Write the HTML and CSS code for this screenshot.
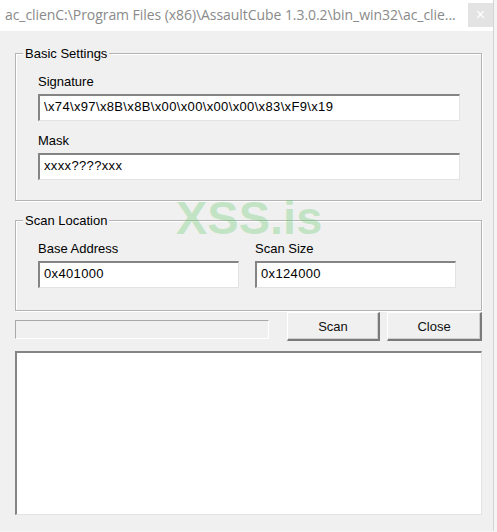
FILE: index.html
```html
<!DOCTYPE html>
<html>
<head>
<meta charset="utf-8">
<link rel="stylesheet" href="styles.css">
</head>
<body>
<div class="window">
  <div class="titlebar">
    <span class="title">ac_clienC:\Program Files (x86)\AssaultCube 1.3.0.2\bin_win32\ac_clie...</span>
    <span class="close-x">×</span>
  </div>
  <div class="client">
    <div class="group group-basic">
      <div class="legend">Basic Settings</div>
      <div class="label">Signature</div>
      <div class="edit">\x74\x97\x8B\x8B\x00\x00\x00\x00\x83\xF9\x19</div>
      <div class="label">Mask</div>
      <div class="edit">xxxx????xxx</div>
    </div>
    <div class="group group-scan">
      <div class="legend">Scan Location</div>
      <div class="cols">
        <div class="col">
          <div class="label">Base Address</div>
          <div class="edit">0x401000</div>
        </div>
        <div class="col">
          <div class="label">Scan Size</div>
          <div class="edit">0x124000</div>
        </div>
      </div>
    </div>
    <div class="actions">
      <div class="progress"></div>
      <div class="btn btn-scan">Scan</div>
      <div class="btn btn-close">Close</div>
    </div>
    <div class="listbox"></div>
  </div>
  <div class="watermark">XSS.is</div>
</div>
</body>
</html>
```
FILE: styles.css
```css
html, body {
  margin: 0;
  padding: 0;
}
body {
  width: 497px;
  height: 532px;
  background: #f4f4f4;
  font-family: "Liberation Sans", Arial, sans-serif;
  font-size: 13px;
  color: #000;
  overflow: hidden;
}
.window {
  position: relative;
  width: 493px;
  height: 531px;
  background: #f0f0f0;
  border-right: 1px solid #d4d4d4;
}
.titlebar {
  height: 31px;
  background: #fff;
  display: flex;
  align-items: flex-start;
}
.title {
  flex: none;
  font-family: "Open Sans", "Noto Sans", sans-serif;
  font-size: 14px;
  letter-spacing: -0.06px;
  line-height: 30px;
  color: #8a8a8a;
  padding-left: 5px;
  white-space: nowrap;
}
.close-x {
  flex: none;
  margin-left: auto;
  margin-top: 3px;
  width: 25px;
  height: 24px;
  background: #e3e3e3;
  color: #fff;
  font-family: "Liberation Sans", sans-serif;
  font-size: 16px;
  line-height: 24px;
  text-align: center;
}
.client {
  padding: 22px 11px 0 15px;
}
.group {
  border: 1px solid #b4b4b4;
  box-shadow: inset 1px 1px 0 #fff, 1px 1px 0 #fff;
  padding: 0 21px 20px 22px;
}
.group-scan {
  margin-top: 19px;
  padding-bottom: 22px;
}
.legend {
  display: table;
  margin: -8px 0 0 -15px;
  padding: 0 2px;
  background: #f0f0f0;
  line-height: 16px;
}
.label {
  line-height: 16px;
  margin-top: 12px;
  margin-bottom: 4px;
  white-space: nowrap;
}
.edit {
  box-sizing: border-box;
  height: 27px;
  background: #fff;
  border-style: solid;
  border-width: 2px 1px 1px 2px;
  border-color: #848484 #e3e3e3 #e3e3e3 #848484;
  padding: 0 4px;
  line-height: 21px;
  letter-spacing: 0.35px;
  white-space: nowrap;
  overflow: hidden;
}
.cols {
  display: grid;
  grid-template-columns: 201px 201px;
  column-gap: 16px;
}
.actions {
  display: flex;
  align-items: flex-start;
  margin-top: 1px;
}
.progress {
  box-sizing: border-box;
  width: 254px;
  height: 19px;
  margin-top: 8px;
  border-style: solid;
  border-width: 1px;
  border-color: #a8a8a8 #fff #fff #a8a8a8;
  background: #f0f0f0;
}
.btn {
  box-sizing: border-box;
  height: 29px;
  line-height: 27px;
  text-align: center;
  background: #f0f0f0;
  border-style: solid;
  border-width: 1px 2px 2px 1px;
  border-color: #fff #7a7a7a #7a7a7a #fff;
  box-shadow: inset -1px -1px 0 #cfcfcf;
  color: #111;
}
.btn-scan {
  width: 93px;
  margin-left: 18px;
}
.btn-close {
  width: 95px;
  margin-left: 7px;
}
.listbox {
  box-sizing: border-box;
  margin-top: 10px;
  height: 164px;
  background: #fff;
  border-style: solid;
  border-width: 2px 1px 1px 2px;
  border-color: #848484 #e3e3e3 #e3e3e3 #848484;
}
.watermark {
  position: absolute;
  left: 176px;
  top: 194px;
  font-family: "Liberation Sans", Arial, sans-serif;
  font-weight: bold;
  font-size: 47px;
  line-height: 47px;
  color: rgba(97, 200, 105, 0.32);
  pointer-events: none;
}
```
